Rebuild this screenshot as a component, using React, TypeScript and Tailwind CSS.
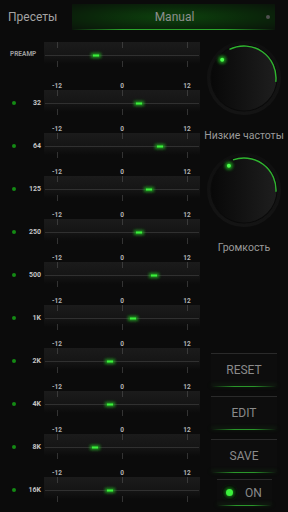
import type { ReactNode } from "react";

// thumb x offset inside the 156px track (78 = 0 dB)
const bands: { label: string; x: number }[] = [
  { label: "32", x: 95 },
  { label: "64", x: 116 },
  { label: "125", x: 105 },
  { label: "250", x: 95 },
  { label: "500", x: 110 },
  { label: "1K", x: 89 },
  { label: "2K", x: 66 },
  { label: "4K", x: 66 },
  { label: "8K", x: 51 },
  { label: "16K", x: 66 },
];

function Track({ x, id }: { x: number; id: string }) {
  const ticks = [13, 78, 143];
  return (
    <svg width="156" height="35" className="block shrink-0">
      <defs>
        <linearGradient id={`tg-${id}`} x1="0" y1="0" x2="0" y2="1">
          <stop offset="0" stopColor="#1b1b1b" />
          <stop offset="0.6" stopColor="#151515" />
          <stop offset="1" stopColor="#0b0b0b" />
        </linearGradient>
        <filter id={`tb-${id}`} x="-100%" y="-200%" width="300%" height="500%">
          <feGaussianBlur stdDeviation="1.6" />
        </filter>
      </defs>
      <rect x="0" y="0" width="156" height="22" fill={`url(#tg-${id})`} />
      {ticks.map((t) => (
        <g key={t}>
          <rect x={t} y="0" width="1" height="6" fill="#3a3a3a" />
          <rect x={t} y="19" width="1" height="6" fill="#333333" />
        </g>
      ))}
      <rect x="1" y="13" width="154" height="1" fill="#303030" />
      <rect x={x - 5} y="11" width="10" height="5" fill="#22c522" opacity="0.7" filter={`url(#tb-${id})`} />
      <rect x={x - 3} y="12.5" width="6" height="2" fill="#3cf03c" />
    </svg>
  );
}

function Knob({ start, end, dot, id }: { start: number; end: number; dot: number; id: string }) {
  const pt = (a: number, r: number) => {
    const rad = (a * Math.PI) / 180;
    return [40 + r * Math.sin(rad), 40 - r * Math.cos(rad)];
  };
  const [sx, sy] = pt(start, 32);
  const [ex, ey] = pt(end, 32);
  const [dx, dy] = pt(dot, 28.5);
  return (
    <svg width="80" height="80" className="block">
      <defs>
        <linearGradient id={`kg-${id}`} x1="0" y1="0" x2="1" y2="0">
          <stop offset="0" stopColor="#080808" />
          <stop offset="1" stopColor="#1e1e1e" />
        </linearGradient>
        <linearGradient id={`ko-${id}`} x1="0" y1="0" x2="0" y2="1">
          <stop offset="0" stopColor="#0f0f0f" />
          <stop offset="1" stopColor="#141414" />
        </linearGradient>
        <filter id={`kd-${id}`} x="-200%" y="-200%" width="500%" height="500%">
          <feGaussianBlur stdDeviation="1.8" />
        </filter>
      </defs>
      <circle cx="40" cy="40" r="37" fill={`url(#ko-${id})`} />
      <circle cx="40" cy="40" r="33.5" fill="#0a0a0a" />
      <circle cx="40" cy="40" r="32.5" fill={`url(#kg-${id})`} />
      <path
        d={`M ${sx} ${sy} A 32 32 0 0 1 ${ex} ${ey}`}
        fill="none"
        stroke="#2fb52f"
        strokeWidth="1.4"
      />
      <circle cx={dx} cy={dy} r="4" fill="#22dd22" opacity="0.6" filter={`url(#kd-${id})`} />
      <circle cx={dx} cy={dy} r="2" fill="#4cff4c" />
    </svg>
  );
}

function GlowBox({ className, children }: { className: string; children: ReactNode }) {
  return (
    <div className={`flex flex-col ${className}`}>
      <div className="h-px bg-[#2a2a2a]" />
      <div className="flex flex-1 items-center justify-center bg-[#0d0d0d]">{children}</div>
      <div className="h-px bg-[linear-gradient(90deg,transparent,#2a962a_35%,#2a962a_65%,transparent)] shadow-[0_-1px_4px_rgba(40,160,40,0.35)]" />
    </div>
  );
}

function TickLabels() {
  return (
    <div className="flex h-[8px]">
      <div className="w-[44px]" />
      <div className="flex w-[156px] justify-between px-[3px] text-[6.5px] font-bold leading-[8px] text-[#b4b4b4]">
        <span className="w-[20px] text-center">-12</span>
        <span className="w-[20px] text-center">0</span>
        <span className="w-[20px] text-center">12</span>
      </div>
    </div>
  );
}

export default function App() {
  return (
    <div className="flex h-[512px] w-[288px] flex-col overflow-hidden bg-[#0b0b0b] font-['Roboto',sans-serif]">
      {/* presets bar */}
      <div className="flex h-[34px] items-start pl-[8px] pr-[13px] pt-[4px]">
        <div className="flex h-[26px] w-[64px] items-center text-[12px] text-[#a3a3a3]">Пресеты</div>
        <div className="relative flex h-[26px] flex-1 flex-col bg-[radial-gradient(ellipse_at_center,#0d420d_0%,#0a280a_55%,#0a140a_100%)]">
          <div className="flex flex-1 items-center justify-center pl-[2px] text-[12px] text-[#8e8e8e]">Manual</div>
          <div className="h-px bg-[linear-gradient(90deg,transparent,#2aa52a_25%,#2aa52a_75%,transparent)]" />
          <div className="absolute right-[5px] top-[11px] h-[4px] w-[4px] rounded-full bg-[#505050]" />
        </div>
      </div>

      <div className="flex flex-1">
        {/* equalizer */}
        <div className="flex w-[204px] flex-col pt-[9px]">
          <div className="flex h-[35px]">
            <div className="flex h-[26px] w-[44px] items-center pl-[10px] text-[6.5px] font-bold text-[#9c9c9c]">PREAMP</div>
            <Track x={52} id="pre" />
          </div>
          <div className="h-[5px]" />
          {bands.map((b) => (
            <div key={b.label} className="flex flex-col">
              <TickLabels />
              <div className="flex h-[35px]">
                <div className="flex h-[26px] w-[44px] items-center pl-[12px] pr-[3px]">
                  <div className="h-[4px] w-[4px] rounded-full bg-[#148a14]" />
                  <div className="flex-1 text-right text-[7px] font-bold text-[#c4c4c4]">{b.label}</div>
                </div>
                <Track x={b.x} id={b.label} />
              </div>
            </div>
          ))}
        </div>

        {/* knobs and buttons */}
        <div className="flex w-[84px] flex-col items-center pr-[4px]">
          <div className="mt-[5px]">
            <Knob start={-27} end={97} dot={-50} id="bass" />
          </div>
          <div className="mt-[11px] h-[14px] whitespace-nowrap text-[10.5px] leading-[14px] text-[#9a9a9a]">Низкие частоты</div>
          <div className="mt-[7px]">
            <Knob start={-20} end={93} dot={-32} id="vol" />
          </div>
          <div className="mt-[11px] h-[14px] text-[10.5px] leading-[14px] text-[#9a9a9a]">Громкость</div>

          <GlowBox className="mt-[98px] h-[34px] w-[66px]">
            <span className="text-[12px] text-[#8a8a8a]">RESET</span>
          </GlowBox>
          <GlowBox className="mt-[9px] h-[34px] w-[66px]">
            <span className="text-[12px] text-[#8a8a8a]">EDIT</span>
          </GlowBox>
          <GlowBox className="mt-[9px] h-[34px] w-[66px]">
            <span className="text-[12px] text-[#8a8a8a]">SAVE</span>
          </GlowBox>
          <GlowBox className="mt-[6px] h-[27px] w-[55px]">
            <div className="flex items-center gap-[8px] pr-[4px]">
              <div className="flex h-[15px] w-[15px] items-center justify-center rounded-full bg-[#060606]">
                <div className="h-[7px] w-[7px] rounded-full bg-[#3cf03c] shadow-[0_0_4px_1px_rgba(40,220,40,0.7)]" />
              </div>
              <span className="text-[12px] text-[#8a8a8a]">ON</span>
            </div>
          </GlowBox>
        </div>
      </div>
    </div>
  );
}
